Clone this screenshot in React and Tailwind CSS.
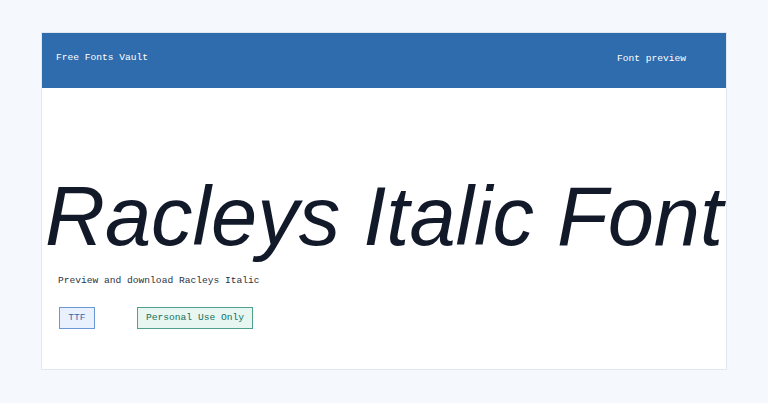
const App = () => {
  const mono = { fontFamily: "'Liberation Mono', 'DejaVu Sans Mono', monospace" };

  return (
    <div className="min-h-screen bg-[#f5f9fe] px-[41px] pt-[32px]">
      <div className="border border-[#e2e8f0] bg-white">
        {/* top bar */}
        <header
          className="flex h-[55px] items-center justify-between bg-[#2f6cae] pb-[4px] pl-[14px] pr-[40px] text-[9.6px] text-white"
          style={mono}
        >
          <span>Free Fonts Vault</span>
          <span className="pt-[2px]">Font preview</span>
        </header>

        <div className="pb-[40px] pt-[87px]">
          <h1
            className="whitespace-nowrap pl-[3px] text-[83px] italic leading-none text-[#121a2a]"
            style={{ fontFamily: "'Liberation Sans', Arial, sans-serif" }}
          >
            Racleys Italic Font
          </h1>

          <p className="mt-[16px] pl-[16px] text-[9.6px] leading-[14px] text-[#2a3344]" style={mono}>
            Preview and download Racleys Italic
          </p>

          <div className="mt-[19px] flex items-center gap-[42px] pl-[17px] text-[9.6px]" style={mono}>
            <span className="flex h-[22px] w-[36px] items-center justify-center border border-[#6a98d4] bg-[#e8f1fd] text-[#2f6cae]">
              TTF
            </span>
            <span className="flex h-[22px] w-[116px] items-center justify-center border border-[#4fa08c] bg-[#e7f6f1] text-[#11705e]">
              Personal Use Only
            </span>
          </div>
        </div>
      </div>
    </div>
  );
};

export default App;
